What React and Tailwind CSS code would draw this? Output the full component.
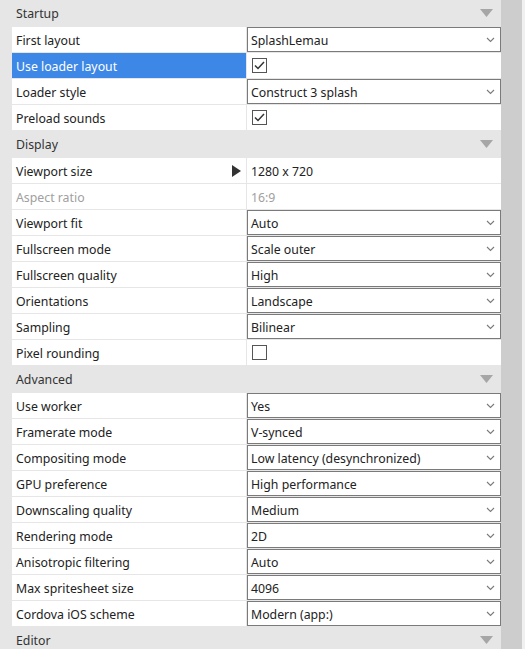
import React from 'react';

const sections = [
  {
    title: 'Startup',
    rows: [
      { label: 'First layout', type: 'select', value: 'SplashLemau' },
      { label: 'Use loader layout', type: 'check', checked: true, selected: true },
      { label: 'Loader style', type: 'select', value: 'Construct 3 splash' },
      { label: 'Preload sounds', type: 'check', checked: true },
    ],
  },
  {
    title: 'Display',
    rows: [
      { label: 'Viewport size', type: 'expand', value: '1280 x 720' },
      { label: 'Aspect ratio', type: 'disabled', value: '16:9' },
      { label: 'Viewport fit', type: 'select', value: 'Auto' },
      { label: 'Fullscreen mode', type: 'select', value: 'Scale outer' },
      { label: 'Fullscreen quality', type: 'select', value: 'High' },
      { label: 'Orientations', type: 'select', value: 'Landscape' },
      { label: 'Sampling', type: 'select', value: 'Bilinear' },
      { label: 'Pixel rounding', type: 'check', checked: false },
    ],
  },
  {
    title: 'Advanced',
    rows: [
      { label: 'Use worker', type: 'select', value: 'Yes' },
      { label: 'Framerate mode', type: 'select', value: 'V-synced' },
      { label: 'Compositing mode', type: 'select', value: 'Low latency (desynchronized)' },
      { label: 'GPU preference', type: 'select', value: 'High performance' },
      { label: 'Downscaling quality', type: 'select', value: 'Medium' },
      { label: 'Rendering mode', type: 'select', value: '2D' },
      { label: 'Anisotropic filtering', type: 'select', value: 'Auto' },
      { label: 'Max spritesheet size', type: 'select', value: '4096' },
      { label: 'Cordova iOS scheme', type: 'select', value: 'Modern (app:)' },
    ],
  },
  { title: 'Editor', rows: [] },
];

function Chevron() {
  return (
    <svg width="9" height="6" viewBox="0 0 9 6" className="shrink-0">
      <path d="M1 1 L4.5 4.5 L8 1" fill="none" stroke="#7a7a7a" strokeWidth="1.1" />
    </svg>
  );
}

function Checkbox({ checked }) {
  return (
    <div className="ml-[5px] w-[15px] h-[15px] border border-[#555] bg-white flex items-center justify-center">
      {checked && (
        <svg width="11" height="9" viewBox="0 0 11 9">
          <path d="M1 4.5 L4 7.5 L10 1" fill="none" stroke="#333" strokeWidth="1.5" />
        </svg>
      )}
    </div>
  );
}

function Value({ row }) {
  if (row.type === 'select') {
    return (
      <div className="h-full w-[254px] border border-[#7a7a7a] bg-white flex items-center justify-between pl-[3px] pr-[5px] text-[#222]">
        <span className="pt-[4px]">{row.value}</span>
        <Chevron />
      </div>
    );
  }
  if (row.type === 'check') {
    return (
      <div className="h-full flex items-center">
        <Checkbox checked={row.checked} />
      </div>
    );
  }
  if (row.type === 'disabled') {
    return <div className="h-full flex items-center pl-1 pt-[4px] text-[#a0a0a0]">{row.value}</div>;
  }
  return <div className="h-full flex items-center pl-1 pt-[4px] text-[#222]">{row.value}</div>;
}

function Row({ row }) {
  const labelCls = row.selected
    ? 'bg-[#3d87e6] text-white'
    : row.type === 'disabled'
    ? 'bg-white text-[#a0a0a0]'
    : 'bg-white text-[#222]';
  return (
    <div className="flex h-[25px] ml-[12px] mb-px bg-white">
      <div className={`w-[234px] flex items-center justify-between pl-1 pr-[5px] ${labelCls}`}>
        <span className="pt-[4px]">{row.label}</span>
        {row.type === 'expand' && (
          <svg width="9" height="12" viewBox="0 0 9 12">
            <path d="M0 0 L9 6 L0 12 Z" fill="#333" />
          </svg>
        )}
      </div>
      <div className="w-px bg-[#e6e6e6]" />
      <div className="flex-1 relative">
        <Value row={row} />
      </div>
    </div>
  );
}

function Header({ title }) {
  return (
    <div className="h-[26px] flex items-center justify-between pl-4 pr-[8px] text-[#333]">
      <span className="pt-[2px]">{title}</span>
      <svg width="13" height="8" viewBox="0 0 13 8">
        <path d="M0 0 L13 0 L6.5 8 Z" fill="#a6a6a6" />
      </svg>
    </div>
  );
}

export default function App() {
  return (
    <div
      className="w-[525px] h-[649px] overflow-hidden flex bg-[#f0f0f0] text-[12.3px] leading-none"
      style={{ fontFamily: '"Noto Sans", "Open Sans", sans-serif' }}
    >
      <div className="w-[501px] h-full bg-[#e6e6e6] flex flex-col">
        {sections.map((s) => (
          <div key={s.title}>
            <Header title={s.title} />
            <div className="pt-px">
              {s.rows.map((r) => (
                <Row key={r.label} row={r} />
              ))}
            </div>
          </div>
        ))}
      </div>
      <div className="w-[21px] h-full bg-[#cdcdcd]" />
    </div>
  );
}
